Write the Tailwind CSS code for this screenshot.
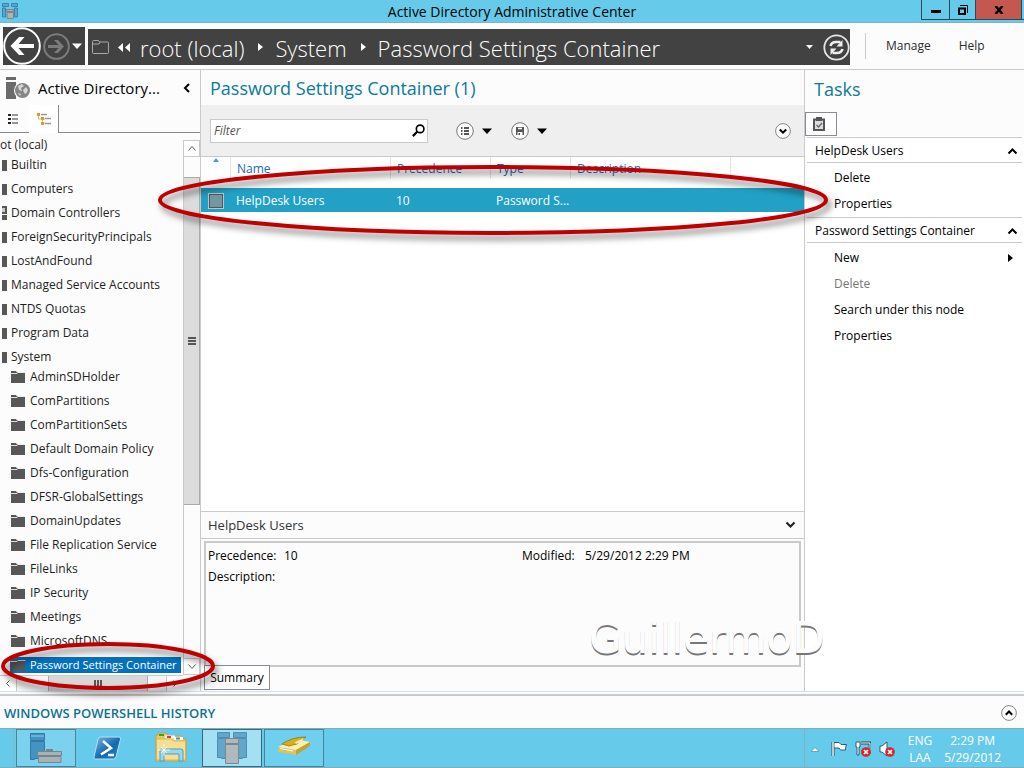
<!DOCTYPE html>
<html lang="en">
<head>
<meta charset="utf-8">
<title>Active Directory Administrative Center</title>
<meta name="viewport" content="width=device-width, initial-scale=1">
<script src="https://cdn.jsdelivr.net/npm/@tailwindcss/browser@4"></script>
</head>
<body class="relative flex h-screen flex-col overflow-hidden bg-[#fcfcfc] font-['Open_Sans','Noto_Sans',sans-serif] text-[12px] leading-4 text-[#1e1e1e]">

<svg class="hidden" aria-hidden="true">
  <symbol id="folder" viewBox="0 0 16 14"><path d="M1 1h5l1 1.500h8v10.500h-14z" fill="#575757"/><path d="M0.500 3.500h6.500l1-1h7.500" stroke="#fcfcfc" stroke-width="0.800" fill="none"/></symbol>
  <symbol id="chev-up" viewBox="0 0 10 8"><path d="M1 6.500L5 2.500L9 6.500" fill="none" stroke="currentColor" stroke-width="2"/></symbol>
  <symbol id="chev-down" viewBox="0 0 10 8"><path d="M1 1.500L5 5.500L9 1.500" fill="none" stroke="currentColor" stroke-width="2"/></symbol>
  <symbol id="tri-down" viewBox="0 0 10 6"><path d="M0 0.500h10l-5 5.500z" fill="currentColor"/></symbol>
  <symbol id="tri-right" viewBox="0 0 5 8"><path d="M0 0l5 4l-5 4z" fill="currentColor"/></symbol>
  <symbol id="error" viewBox="0 0 10 10"><circle cx="5" cy="5" r="4.800" fill="#d8232a"/><path d="M3 3l4 4M7 3l-4 4" stroke="#fff" stroke-width="1.700"/></symbol>
</svg>

<header class="shrink-0">
  <div class="flex h-[23px] items-start border-b border-[#7fb3c6] bg-[#66caea]">
    <div class="w-[103px] shrink-0 pt-[3px] pl-[2px]">
      <svg class="h-4 w-4" viewBox="0 0 16 16"><g fill="#5aa6d3" stroke="#3c82ad" stroke-width="1"><path d="M.5.500h6v3h-6zM.5 5h3v9h-3zM9.500.500h6v3h-6zM12.500 5h3v9h-3z"/></g><path d="M4.500 6.500h7v2h-7zM5 9.500h6.500v6h-6.500z" fill="#a9b4b9" stroke="#7b868b"/></svg>
    </div>
    <h1 class="grow text-center text-[14px] leading-[23px] text-black">Active Directory Administrative Center</h1>
    <div class="flex h-5 w-[103px] shrink-0 border-b border-l border-[#2a4a57]">
      <button aria-label="Minimize" class="flex w-[27px] items-center justify-center"><svg class="h-5 w-3" viewBox="0 0 12 20"><path d="M1 10h10v3h-10z" fill="#000"/></svg></button>
      <button aria-label="Restore" class="flex w-[26px] items-center justify-center border-l border-[#2a4a57]"><svg class="h-[10px] w-[10px]" viewBox="0 0 10 10"><path d="M1 3.500h6v5.500h-6z" fill="none" stroke="#000" stroke-width="2"/><path d="M2 .5h7.500v7.500" fill="none" stroke="#000"/></svg></button>
      <button aria-label="Close" class="mr-[2px] flex grow items-center justify-center border-x border-[#2a4a57] bg-[#c4574f]"><svg class="h-2 w-[10px]" viewBox="0 0 10 8"><path d="M1.500 0l7 8M8.500 0l-7 8" stroke="#000" stroke-width="2.500"/></svg></button>
    </div>
  </div>

  <div class="flex h-[47px] items-start border-b border-[#cacaca] pt-1 pl-[3px]">
    <div class="flex h-[38px] w-[82px] shrink-0 items-center bg-[#424242]">
      <button aria-label="Back"><svg class="h-[38px] w-[38px]" viewBox="0 0 38 38"><circle cx="19" cy="19" r="17.800" fill="none" stroke="#fff" stroke-width="2"/><path d="M31 17v4H15.500l6 7h-5.500L7.500 19L16 10h5.500l-6 7z" fill="#fff"/></svg></button>
      <button aria-label="Forward" class="ml-[2px]"><svg class="h-[27px] w-[27px]" viewBox="0 0 27 27"><circle cx="13.500" cy="13.500" r="12.300" fill="none" stroke="#7b7b7b" stroke-width="2"/><path d="M5 12v3h10.500l-4.500 5h4l6-6.500l-6-6.500h-4l4.500 5z" fill="#7b7b7b"/></svg></button>
      <button aria-label="Recent locations" class="ml-[2px]"><svg class="h-[6px] w-[10px] text-white"><use href="#tri-down"/></svg></button>
    </div>
    <nav aria-label="Address" class="mt-[2px] ml-[3px] flex h-9 min-w-0 flex-1 items-center bg-[#424242] pl-1 text-white [&>a]:text-[22px] [&>a]:leading-9 [&>a]:font-light [&>a]:whitespace-nowrap [&>a]:pt-[2px]">
      <svg class="h-[14px] w-[17px] shrink-0" viewBox="0 0 17 14"><path d="M.5 12.500V1.500q0-1 1-1h5l1 1.500h8q1 0 1 1v9.500q0 1-1 1h-14q-1 0-1-1zM.5 4h6.500l1-2" fill="none" stroke="#a9a9a9"/></svg>
      <button aria-label="Parent locations" class="ml-2 shrink-0"><svg class="h-[9px] w-[14px]" viewBox="0 0 14 9"><path d="M6 0v9l-5-4.500zM13 0v9l-5-4.500z" fill="#fff"/></svg></button>
      <a href="#" class="ml-[9px]">root (local)</a>
      <svg class="ml-[14px] h-2 w-[5px] shrink-0"><use href="#tri-right"/></svg>
      <a href="#" class="ml-3">System</a>
      <svg class="ml-[14px] h-2 w-[5px] shrink-0"><use href="#tri-right"/></svg>
      <a href="#" class="ml-3">Password Settings Container</a>
      <button aria-label="Address history" class="ml-auto"><svg class="h-1 w-[7px]" viewBox="0 0 7 4"><path d="M0 0h7l-3.500 4z" fill="#fff"/></svg></button>
      <button aria-label="Refresh" class="ml-[10px]"><svg class="h-[27px] w-[27px]" viewBox="0 0 27 27"><circle cx="13.500" cy="13.500" r="12.200" fill="none" stroke="#e6e6e6" stroke-width="1.800"/><path d="M7.500 12q1-4 5.500-4h4.500M19.500 15q-1 4-5.500 4h-4.500" fill="none" stroke="#eee" stroke-width="2.600"/><path d="M19.500 6v6.500h-6zM7.500 21v-6.500h6z" fill="#eee"/></svg></button>
    </nav>
    <div class="mt-[6px] ml-[15px] flex h-[26px] w-[159px] shrink-0 items-center border-l border-[#cacaca] pl-5">
      <button class="text-[#2b2b2b]">Manage</button>
      <button class="ml-7 text-[#2b2b2b]">Help</button>
    </div>
  </div>
</header>

<main class="flex min-h-0 flex-1">
  <aside class="flex w-[201px] shrink-0 flex-col border-r border-[#cacaca]">
    <div class="flex h-[35px] shrink-0 items-center pr-[10px] pl-[6px]">
      <svg class="h-6 w-[25px] shrink-0" viewBox="0 0 25 24"><path d="M0 1h10v3h-10zM0 6h10v17h-10z" fill="#6b6b6b"/><circle cx="16.500" cy="14.500" r="8.500" fill="#fcfcfc"/><circle cx="16.500" cy="14.500" r="7.500" fill="#858585"/><path d="M12 10l4-2l2 2l-3 2l1 3l-3-1zM17 14l3-3l2 3l-2 4l-2-1zM12 17l3 1l-1 2z" fill="#d5d5d5"/></svg>
      <h2 class="ml-[7px] text-[15px] leading-5 whitespace-nowrap text-black">Active Directory...</h2>
      <button aria-label="Collapse navigation" class="ml-auto"><svg class="h-[10px] w-[7px]" viewBox="0 0 7 10"><path d="M6 1L2 5L6 9" fill="none" stroke="#000" stroke-width="2"/></svg></button>
    </div>
    <div class="flex h-[28px] shrink-0">
      <button aria-label="List view" class="flex w-[29px] items-center justify-center border-b border-[#8a8a8a] pr-[2px]"><svg class="h-3 w-[11px]" viewBox="0 0 11 12"><path d="M0 1h3v2h-3zM0 5h3v2h-3zM0 9h3v2h-3z" fill="#222"/><path d="M4 2h6M4 6h6M4 10h6" stroke="#333"/></svg></button>
      <button aria-label="Tree view" class="flex w-[30px] items-center justify-center border-r border-[#8a8a8a] bg-white"><svg class="h-3 w-[14px]" viewBox="0 0 14 12"><path d="M1.500 2v4h4v4h3M5 6h3" fill="none" stroke="#e5b56a"/><path d="M0 0h3v3h-3zM4 4h3v3h-3zM4 9h3v3h-3z" fill="#dc9c2d"/><path d="M4 1.500h6M8 5.500h6M8 10.500h6" stroke="#999" stroke-width="1.500"/></svg></button>
      <span class="grow border-b border-[#8a8a8a]"></span>
    </div>
    <div class="flex min-h-0 flex-1 pt-[7px]">
      <div class="flex w-[183px] shrink-0 flex-col">
        <div class="-mt-1 min-h-0 flex-1 overflow-hidden">
          <div class="h-[17px] leading-[18px]">ot (local)</div>
          <ul class="[&>li]:flex [&>li]:h-6 [&>li]:items-center [&>li]:gap-1 [&>li]:whitespace-nowrap [&>li]:pl-[2px] [&_i]:h-[11px] [&_i]:w-[5px] [&_i]:shrink-0 [&_i]:bg-[#575757]">
            <li><i></i><a href="#">Builtin</a></li>
            <li><i></i><a href="#">Computers</a></li>
            <li><svg class="h-[14px] w-[5px] shrink-0" viewBox="0 0 5 14"><path d="M0 0h5v14h-5z" fill="#575757"/><path d="M0 2h3v4h-3z" fill="#c9c9c9"/><path d="M0 8.500h5" stroke="#fcfcfc"/></svg><a href="#">Domain Controllers</a></li>
            <li><i></i><a href="#">ForeignSecurityPrincipals</a></li>
            <li><i></i><a href="#">LostAndFound</a></li>
            <li><i></i><a href="#">Managed Service Accounts</a></li>
            <li><i></i><a href="#">NTDS Quotas</a></li>
            <li><i></i><a href="#">Program Data</a></li>
            <li><i></i><a href="#">System</a></li>
          </ul>
          <ul class="-mt-1 [&>li]:flex [&>li]:h-6 [&>li]:items-center [&>li]:whitespace-nowrap [&>li]:pl-[10px] [&_a]:pl-1 [&_svg]:h-[14px] [&_svg]:w-4 [&_svg]:shrink-0">
            <li><svg><use href="#folder"/></svg><a href="#">AdminSDHolder</a></li>
            <li><svg><use href="#folder"/></svg><a href="#">ComPartitions</a></li>
            <li><svg><use href="#folder"/></svg><a href="#">ComPartitionSets</a></li>
            <li><svg><use href="#folder"/></svg><a href="#">Default Domain Policy</a></li>
            <li><svg><use href="#folder"/></svg><a href="#">Dfs-Configuration</a></li>
            <li><svg><use href="#folder"/></svg><a href="#">DFSR-GlobalSettings</a></li>
            <li><svg><use href="#folder"/></svg><a href="#">DomainUpdates</a></li>
            <li><svg><use href="#folder"/></svg><a href="#">File Replication Service</a></li>
            <li><svg><use href="#folder"/></svg><a href="#">FileLinks</a></li>
            <li><svg><use href="#folder"/></svg><a href="#">IP Security</a></li>
            <li><svg><use href="#folder"/></svg><a href="#">Meetings</a></li>
            <li><svg><use href="#folder"/></svg><a href="#">MicrosoftDNS</a></li>
            <li><span class="flex w-[171px] items-center bg-[#0571bd] text-[11px] text-white"><svg><use href="#folder"/></svg><a href="#" aria-current="true">Password Settings Container</a></span></li>
          </ul>
        </div>
        <div class="flex h-4 shrink-0 items-center border-t border-[#cacaca] bg-[#f5f5f5]">
          <button aria-label="Scroll left" class="flex h-full w-[17px] items-center justify-center border-r border-[#cacaca] bg-white"><svg class="h-[7px] w-1" viewBox="0 0 4 7"><path d="M3.500.500L.5 3.500l3 3" fill="none" stroke="#555"/></svg></button>
          <div class="ml-[31px] flex h-full w-[100px] items-center justify-center gap-[1px] border-x border-[#ababab] bg-[#d8d8d8] [&>i]:h-[7px] [&>i]:w-[2px] [&>i]:bg-[#555]"><i></i><i></i><i></i></div>
          <button aria-label="Scroll right" class="ml-auto flex h-full w-[17px] items-center justify-center border-l border-[#cacaca] bg-white"><svg class="h-[7px] w-1" viewBox="0 0 4 7"><path d="M.5.500l3 3l-3 3" fill="none" stroke="#555"/></svg></button>
        </div>
      </div>
      <div class="mb-4 flex flex-1 flex-col border-l border-[#cacaca] bg-[#fcfcfc]">
        <button aria-label="Scroll up" class="flex h-[17px] shrink-0 items-center justify-center border border-l-0 border-[#cacaca] bg-white"><svg class="h-[5px] w-2" viewBox="0 0 8 5"><path d="M.5 4.500l3.500-4l3.500 4" fill="none" stroke="#555"/></svg></button>
        <div class="mt-5 flex h-[328px] flex-col items-center justify-center gap-[1px] border border-l-0 border-[#ababab] bg-[#dcdcdc] [&>i]:h-[2px] [&>i]:w-2 [&>i]:bg-[#555]"><i></i><i></i><i></i></div>
        <button aria-label="Scroll down" class="mt-auto flex h-[17px] shrink-0 items-center justify-center border border-l-0 border-[#cacaca] bg-white"><svg class="h-[5px] w-2" viewBox="0 0 8 5"><path d="M.5.500l3.500 4l3.500-4" fill="none" stroke="#555"/></svg></button>
      </div>
    </div>
  </aside>

  <section class="flex min-w-0 flex-1 flex-col border-r border-[#cacaca]">
    <h2 class="h-[35px] shrink-0 pl-[9px] text-[18px] leading-[37px] text-[#0b7a9c]">Password Settings Container (1)</h2>
    <div class="flex h-[52px] shrink-0 items-center border-b border-[#cacaca] bg-[#efefef] pr-[13px] pl-[9px]">
      <label class="flex h-6 w-[218px] items-center border border-[#cacaca] bg-white pr-[2px] pl-[3px]">
        <input aria-label="Filter" placeholder="Filter" class="min-w-0 flex-1 italic outline-none placeholder:text-[#555]">
        <svg class="h-[13px] w-[13px]" viewBox="0 0 12 12"><circle cx="7.500" cy="4.500" r="3.500" fill="none" stroke="#000" stroke-width="1.500"/><path d="M5 7L.8 11.200" stroke="#000" stroke-width="2"/></svg>
      </label>
      <button aria-label="Criteria" class="ml-7 flex items-center gap-2"><svg class="h-[18px] w-[18px]" viewBox="0 0 18 18"><circle cx="9" cy="9" r="8.300" fill="#fcfcfc" stroke="#777"/><path d="M5 6h1.500M5 9h1.500M5 12h1.500M8 6h5M8 9h5M8 12h5" stroke="#555" stroke-width="1.800"/></svg><svg class="h-[6px] w-[10px] text-black"><use href="#tri-down"/></svg></button>
      <button aria-label="Saved queries" class="ml-[19px] flex items-center gap-2"><svg class="h-[18px] w-[18px]" viewBox="0 0 18 18"><circle cx="9" cy="9" r="8.300" fill="#fcfcfc" stroke="#777"/><path d="M5 5h8v8h-1.500v-3h-5v3h-1.500zM7.500 11h1.500v2h-1.500z" fill="#555"/><path d="M7 6.500h4" stroke="#fcfcfc" stroke-width="1.600"/></svg><svg class="h-[6px] w-[10px] text-black"><use href="#tri-down"/></svg></button>
      <button aria-label="Expand search" class="ml-auto"><svg class="h-4 w-4" viewBox="0 0 16 16"><circle cx="8" cy="8" r="7.400" fill="#fcfcfc" stroke="#888"/><path d="M4.800 6.500l3.200 3.200l3.200-3.200" fill="none" stroke="#000" stroke-width="2"/></svg></button>
    </div>
    <div class="min-h-0 flex-1 bg-white">
      <table class="w-full table-fixed border-collapse text-left">
        <colgroup><col class="w-[30px]"><col class="w-[160px]"><col class="w-[100px]"><col class="w-[80px]"><col class="w-[160px]"><col></colgroup>
        <thead>
          <tr class="h-[31px] [&>th]:p-0 [&>th]:align-top [&>th]:font-normal [&_span]:block [&_span]:h-[22px] [&_span]:border-r [&_span]:border-[#e4e4e4] [&_span]:pl-[6px] [&_span]:leading-6 text-[#1968b4]">
            <th><span aria-label="Sorted ascending"><svg class="ml-[6px] h-[5px] w-[6px]" viewBox="0 0 6 5"><path d="M0 5l3-4l3 4z" fill="#4f9cc5"/></svg></span></th>
            <th><span>Name</span></th><th><span>Precedence</span></th><th><span>Type</span></th><th><span>Description</span></th><th></th>
          </tr>
        </thead>
        <tbody>
          <tr class="h-6 bg-[#22a0c6] text-white [&>td]:pt-[1px] [&>td]:pr-0 [&>td]:pb-0 [&>td]:pl-[5px]">
            <td><input type="checkbox" aria-label="Select HelpDesk Users" class="ml-[2px] block h-4 w-4 appearance-none border-2 border-[#555] bg-[#7396a2] outline outline-1 -outline-offset-1 outline-[#b5c5ca]"></td>
            <td>HelpDesk Users</td><td>10</td><td class="whitespace-nowrap">Password S...</td><td></td><td></td>
          </tr>
        </tbody>
      </table>
    </div>
    <div class="flex h-7 shrink-0 items-center justify-between border-y border-[#cacaca] pr-2 pl-[7px]">
      <h3 class="text-[13px] text-[#333]">HelpDesk Users</h3>
      <button aria-label="Collapse details"><svg class="h-2 w-[11px]"><use href="#chev-down"/></svg></button>
    </div>
    <div class="shrink-0 px-[3px] pt-[2px] pb-[1px]">
      <div class="grid h-[126px] grid-cols-[314px_1fr] content-start border-2 border-[#cacaca] pt-[2px] pl-[2px] leading-[21px] text-black">
        <dl class="grid grid-cols-[76px_1fr]"><dt>Precedence:</dt><dd>10</dd><dt>Description:</dt><dd></dd></dl>
        <dl class="grid grid-cols-[63px_1fr] content-start"><dt>Modified:</dt><dd>5/29/2012 2:29 PM</dd></dl>
      </div>
      <button class="relative -mt-[2px] block h-[25px] w-[66px] border border-[#8b8b98] bg-white text-black">Summary</button>
    </div>
  </section>

  <aside class="flex w-[219px] shrink-0 flex-col text-black">
    <h2 class="h-[42px] pl-[9px] text-[18px] leading-[39px] text-[#0b7a9c]">Tasks</h2>
    <button aria-label="Task list" class="flex h-6 w-8 items-center border border-[#8b8b98] bg-white pl-[7px]"><svg class="h-[14px] w-3" viewBox="0 0 12 14"><path d="M1 2.500h10v10.500h-10z" fill="#ddd" stroke="#555" stroke-width="2"/><path d="M3 0h6v4h-6z" fill="#555"/><path d="M3.500 8l2 2l3.500-4" fill="none" stroke="#666" stroke-width="1.300"/></svg></button>
    <div class="flex-1 bg-white pt-[1px] pr-[2px] pl-[2px]">
      <div class="flex h-[26px] items-center justify-between border-y border-[#cacaca] pt-[1px] pr-1 pl-2"><h3 class="font-medium">HelpDesk Users</h3><button aria-label="Collapse HelpDesk Users"><svg class="h-2 w-[11px]"><use href="#chev-up"/></svg></button></div>
      <div class="flex flex-col items-start pt-[2px] pl-[27px] leading-[26px]"><button>Delete</button><button>Properties</button></div>
      <div class="flex h-[26px] items-center justify-between border-y border-[#cacaca] pt-[1px] pr-1 pl-2"><h3 class="font-medium">Password Settings Container</h3><button aria-label="Collapse Password Settings Container"><svg class="h-2 w-[11px]"><use href="#chev-up"/></svg></button></div>
      <div class="flex flex-col items-start pt-[2px] pl-[27px] leading-[26px]">
        <button class="flex w-full items-center justify-between pr-[9px]">New<svg class="h-2 w-[5px]"><use href="#tri-right"/></svg></button>
        <button disabled class="text-[#777]">Delete</button><button>Search under this node</button><button>Properties</button>
      </div>
    </div>
  </aside>
</main>

<section class="h-[37px] shrink-0 border-t border-[#d5e0ee] pt-[2px]">
  <div class="flex h-[34px] items-center justify-between border-t-2 border-[#cacaca] pt-[2px] pr-[7px] pl-1">
    <h2 class="text-[13px] font-semibold text-[#0b7296]">WINDOWS POWERSHELL HISTORY</h2>
    <button aria-label="Expand history"><svg class="h-4 w-4" viewBox="0 0 16 16"><circle cx="8" cy="8" r="7.400" fill="#fcfcfc" stroke="#888"/><path d="M4.800 9.700l3.200-3.200l3.200 3.200" fill="none" stroke="#000" stroke-width="2"/></svg></button>
  </div>
</section>

<footer class="flex h-10 shrink-0 border-y border-[#83abb9] bg-[#66caea]">
  <div class="mr-[2px] w-[14px] border-r border-[#8db5c4]"></div>
  <button aria-label="Server Manager" class="flex w-[60px] items-center justify-center border border-[#4b8296] bg-[#7bd2ee]">
    <svg class="h-8 w-8" viewBox="0 0 32 32"><path d="M.5 1.500h14v7h-14zM.5 9.500h14v17h-10v1h-4z" fill="#4294c2" stroke="#3379a2"/><path d="M1 4h13" stroke="#8ecbe8"/><path d="M7.500 19.500h24v4h-24zM8.500 24.500h22.500v6h-22.500z" fill="#a7b2b7" stroke="#76868d"/><path d="M16 18h7" stroke="#77878e" stroke-width="2"/></svg></button>
  <button aria-label="Windows PowerShell" class="flex w-[63px] items-center justify-center">
    <svg class="h-6 w-8" viewBox="0 0 32 24"><defs><linearGradient id="ps" x1="0" y1="0" x2="1" y2="1"><stop offset="0" stop-color="#78bce8"/><stop offset=".55" stop-color="#1768ad"/><stop offset="1" stop-color="#2386cc"/></linearGradient></defs><path d="M8 1h19q2 0 1.500 2l-4.500 18q-.5 2-2.500 2h-18q-2 0-1.500-2l4-18q.5-2 2-2z" fill="url(#ps)" stroke="#b5dff4"/><path d="M11 5l8 7l-10 6.500M16 19h6" fill="none" stroke="#fff" stroke-width="2.500"/></svg></button>
  <button aria-label="File Explorer" class="flex w-[63px] items-center justify-center">
    <svg class="h-8 w-8" viewBox="0 0 32 32"><path d="M1 3h2V1h8l2 3h14v3h4v22h-30z" fill="#eac963" stroke="#c5a445"/><path d="M4 2h5v2h-5z" fill="#28a72c"/><path d="M10 3.500h10v3h-10z" fill="#fff"/><path d="M12 4h4v2h-4z" fill="#d8402e"/><path d="M19 5h9v3h-9z" fill="#fff"/><path d="M21 5.500h4v2h-4z" fill="#388dce"/><path d="M1.500 7h15l2 2h12v19h-29z" fill="#f6df91" stroke="#d8b75a"/><path d="M5 29V19q0-2 2-2h19q2 0 2 2v10h-4v-7h-15v7z" fill="#9bd6ee" stroke="#4c9fc3"/><path d="M9 12v12M3 18h12M6 15l6 6M12 15l-6 6" stroke="#fff" stroke-width=".8"/></svg></button>
  <button aria-label="Active Directory Administrative Center" class="flex w-[60px] items-center justify-center border border-[#3d6a7b] bg-[#a4e0f4]">
    <svg class="h-8 w-8" viewBox="0 0 32 32"><path d="M1.500.500h12v5h-12zM1.500 6.500h8v20h-4v-1h-4zM17.500.500h13v5h-13zM22.500 6.500h8v19h-4v1h-4z" fill="#63a6c8" stroke="#4b8eb4"/><path d="M9.500 6.500h13v5h-13zM9.500 12.500h13v19h-13z" fill="#b0b9bd" stroke="#7a8990"/></svg></button>
  <button aria-label="Windows Setup" class="ml-[2px] flex w-[60px] items-center justify-center border border-[#4b8296] bg-[#6fcfee]">
    <svg class="mb-1 h-5 w-8" viewBox="0 0 32 20"><path d="M0 12l17-9l15 3v4l-14 9l-18-3z" fill="#d8c55f"/><path d="M0 11l16-8l16 3l-14 8z" fill="#f8efb0"/><path d="M18 14l14-8v4l-14 9z" fill="#bda437"/><path d="M4 8q10-7 24-7q-5 3-9 7q-5 1-8 2z" fill="#d6af1a" stroke="#8a741c" stroke-width=".8"/><path d="M17 6l9-4l-3 4l-5 2z" fill="#fff0a3"/><path d="M2 12.500l13 2.500" stroke="#fff"/></svg></button>
  <div class="ml-auto flex items-center border-l border-[#82b1c1] pt-[2px] pr-[23px] pl-[6px] text-white">
    <button aria-label="Show hidden icons"><svg class="h-[5px] w-2" viewBox="0 0 8 5"><path d="M0 4.500l4-4l4 4z" fill="#fff" stroke="#537b8a" stroke-width=".6"/></svg></button>
    <svg class="ml-3 h-4 w-4" viewBox="0 0 16 16"><path d="M2 1v14" stroke="#274f61" stroke-width="3"/><path d="M3 1.500h5l2 2h5.500q-1.500 3-1 5.500h-5l-1.500-2h-5z" fill="#fff" stroke="#274f61" stroke-width=".9"/><path d="M2 1v14" stroke="#fff" stroke-width="1.400"/></svg>
    <svg class="ml-2 h-4 w-4" viewBox="0 0 16 16"><path d="M6 2h9v9h-9" fill="none" stroke="#274f61" stroke-width="3"/><path d="M6 2h9v9h-9" fill="none" stroke="#e9f6fb" stroke-width="1"/><path d="M1 1h4v5h-1v8h-2v-8h-1z" fill="#fff" stroke="#274f61" stroke-width=".9"/><use href="#error" x="6" y="6" width="10" height="10"/></svg>
    <svg class="ml-2 h-4 w-4" viewBox="0 0 16 16"><path d="M1 5h2l5-4v14l-5-4h-2z" fill="#fff" stroke="#274f61" stroke-width=".9"/><use href="#error" x="6" y="6" width="10" height="10"/></svg>
    <div class="ml-[13px] text-center leading-[17px]">ENG<br>LAA</div>
    <time class="ml-3 text-center leading-[17px] whitespace-nowrap" datetime="2012-05-29T14:29">2:29 PM<br>5/29/2012</time>
  </div>
</footer>

<!-- Annotation layer: highlight rings and author's mark -->
<div class="pointer-events-none absolute top-[615px] left-[589px] font-['DejaVu_Sans',sans-serif] text-[42px] leading-[48px] text-[#fcfcfc] [text-shadow:0_-1px_0_#fff,0_2px_0_#777]">GuillermoD</div>
<svg class="pointer-events-none absolute top-0 left-0 h-[768px] w-[1024px] drop-shadow-[3px_5px_3px_rgba(0,0,0,0.5)]" viewBox="0 0 1024 768" fill="none" stroke="#c00000" stroke-width="4" aria-hidden="true">
  <ellipse cx="493" cy="200" rx="333" ry="33"/>
  <ellipse cx="108" cy="666" rx="105" ry="22"/>
</svg>
</body>
</html>
